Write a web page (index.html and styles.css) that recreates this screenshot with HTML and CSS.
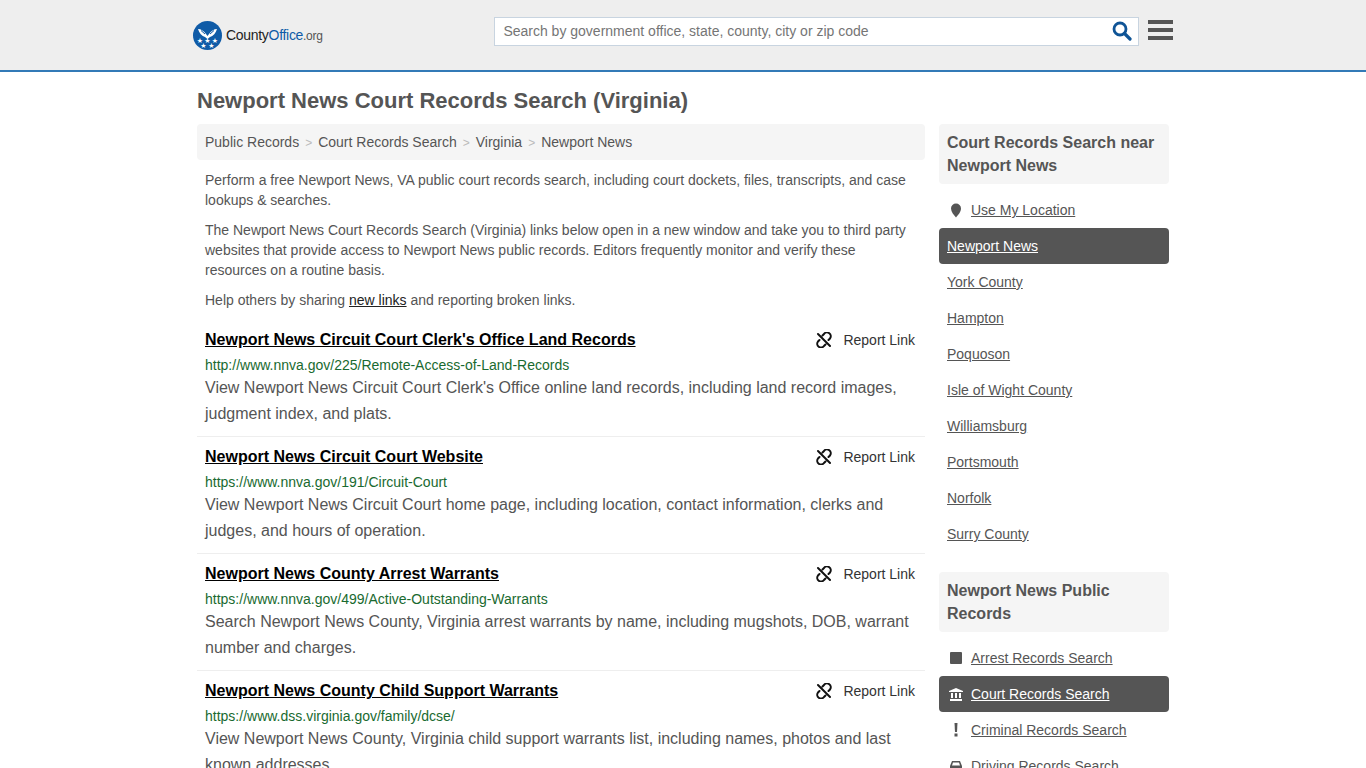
FILE: index.html
```html
<!DOCTYPE html>
<html>
<head>
<title>Newport News Court Records Search (Virginia)</title>
<link rel="stylesheet" href="styles.css">
</head>
<body>
<div class="header">
<div class="headerin">
<a class="logo" href="#">
<svg width="29" height="29" viewBox="0 0 29 29">
<circle cx="14.5" cy="14.5" r="14.5" fill="#0f5ba7"/>
<path d="M5 8 C8 8 11 10 13 13 L14.5 15 L16 13 C18 10 21 8 24 8 C23 12 20 15 17 16 L14.5 18 L12 16 C9 15 6 12 5 8 Z" fill="#fff"/>
<path d="M8 9.500 L12 13 M21 9.500 L17 13" stroke="#0f5ba7" stroke-width="1"/>
<text x="7" y="22" class="logostar">★</text>
<text x="14.500" y="22" class="logostar">★</text>
<text x="22" y="22" class="logostar">★</text>
<text x="10.500" y="27" class="logostar">★</text>
<text x="18.500" y="27" class="logostar">★</text>
</svg>
<span class="logotext">County<b>Office</b><i>.org</i></span>
</a>
<div class="search">
<span class="searchtext">Search by government office, state, county, city or zip code</span>
<svg width="20" height="20" viewBox="0 0 20 20"><circle cx="8" cy="8" r="6" fill="none" stroke="#0f5496" stroke-width="2.800"/><path d="M12.500 12.500 L18 18" stroke="#0f5496" stroke-width="3.200" stroke-linecap="round"/></svg>
</div>
<div class="burger"><span></span><span></span><span></span></div>
</div>
</div>

<div class="wrap">
<div class="main">
<h1>Newport News Court Records Search (Virginia)</h1>
<div class="crumbs">
<a href="#">Public Records</a><span class="sep">&gt;</span><a href="#">Court Records Search</a><span class="sep">&gt;</span><a href="#">Virginia</a><span class="sep">&gt;</span><a href="#">Newport News</a>
</div>
<div class="intro">
<p>Perform a free Newport News, VA public court records search, including court dockets, files, transcripts, and case lookups &amp; searches.</p>
<p>The Newport News Court Records Search (Virginia) links below open in a new window and take you to third party websites that provide access to Newport News public records. Editors frequently monitor and verify these resources on a routine basis.</p>
<p>Help others by sharing <a href="#">new links</a> and reporting broken links.</p>
</div>

<div class="item">
<div class="itemtop"><a class="itemtitle" href="#">Newport News Circuit Court Clerk's Office Land Records</a>
<span class="report"><svg class="unlink" width="16" height="16" viewBox="0 0 16 16"><path d="M6.500 3.500 L8 2 A3.200 3.200 0 0 1 14 6.500 L12.500 8 M9.500 12.500 L8 14 A3.200 3.200 0 0 1 2 9.500 L3.500 8 M2 2 L14 14" fill="none" stroke="#111" stroke-width="2" stroke-linecap="round"/></svg>Report Link</span></div>
<div class="url">http://www.nnva.gov/225/Remote-Access-of-Land-Records</div>
<div class="desc">View Newport News Circuit Court Clerk's Office online land records, including land record images, judgment index, and plats.</div>
</div>

<div class="item">
<div class="itemtop"><a class="itemtitle" href="#">Newport News Circuit Court Website</a>
<span class="report"><svg class="unlink" width="16" height="16" viewBox="0 0 16 16"><path d="M6.500 3.500 L8 2 A3.200 3.200 0 0 1 14 6.500 L12.500 8 M9.500 12.500 L8 14 A3.200 3.200 0 0 1 2 9.500 L3.500 8 M2 2 L14 14" fill="none" stroke="#111" stroke-width="2" stroke-linecap="round"/></svg>Report Link</span></div>
<div class="url">https://www.nnva.gov/191/Circuit-Court</div>
<div class="desc">View Newport News Circuit Court home page, including location, contact information, clerks and judges, and hours of operation.</div>
</div>

<div class="item">
<div class="itemtop"><a class="itemtitle" href="#">Newport News County Arrest Warrants</a>
<span class="report"><svg class="unlink" width="16" height="16" viewBox="0 0 16 16"><path d="M6.500 3.500 L8 2 A3.200 3.200 0 0 1 14 6.500 L12.500 8 M9.500 12.500 L8 14 A3.200 3.200 0 0 1 2 9.500 L3.500 8 M2 2 L14 14" fill="none" stroke="#111" stroke-width="2" stroke-linecap="round"/></svg>Report Link</span></div>
<div class="url">https://www.nnva.gov/499/Active-Outstanding-Warrants</div>
<div class="desc">Search Newport News County, Virginia arrest warrants by name, including mugshots, DOB, warrant number and charges.</div>
</div>

<div class="item">
<div class="itemtop"><a class="itemtitle" href="#">Newport News County Child Support Warrants</a>
<span class="report"><svg class="unlink" width="16" height="16" viewBox="0 0 16 16"><path d="M6.500 3.500 L8 2 A3.200 3.200 0 0 1 14 6.500 L12.500 8 M9.500 12.500 L8 14 A3.200 3.200 0 0 1 2 9.500 L3.500 8 M2 2 L14 14" fill="none" stroke="#111" stroke-width="2" stroke-linecap="round"/></svg>Report Link</span></div>
<div class="url">https://www.dss.virginia.gov/family/dcse/</div>
<div class="desc">View Newport News County, Virginia child support warrants list, including names, photos and last known addresses.</div>
</div>
</div>

<div class="side">
<div class="sidehead">Court Records Search near Newport News</div>
<ul class="sidelist first">
<li class="hasicon"><svg width="12" height="15" viewBox="0 0 12 15"><path d="M6 0.500 A5 5 0 0 1 11 5.500 C11 9 8 12 6 14.500 C4 12 1 9 1 5.500 A5 5 0 0 1 6 0.500 Z" fill="#555"/></svg><a href="#">Use My Location</a></li>
<li class="on"><a href="#">Newport News</a></li>
<li><a href="#">York County</a></li>
<li><a href="#">Hampton</a></li>
<li><a href="#">Poquoson</a></li>
<li><a href="#">Isle of Wight County</a></li>
<li><a href="#">Williamsburg</a></li>
<li><a href="#">Portsmouth</a></li>
<li><a href="#">Norfolk</a></li>
<li><a href="#">Surry County</a></li>
</ul>
<div class="sidehead">Newport News Public Records</div>
<ul class="sidelist">
<li class="hasicon"><svg width="12" height="12" viewBox="0 0 12 12"><rect width="12" height="12" rx="1" fill="#555"/></svg><a href="#">Arrest Records Search</a></li>
<li class="hasicon on"><svg width="14" height="13" viewBox="0 0 14 13"><path d="M7 0 L14 3 V4 H0 V3 Z M1 11 H13 V13 H1 Z M2 5 H4 V10 H2 Z M6 5 H8 V10 H6 Z M10 5 H12 V10 H10 Z" fill="#fff"/></svg><a href="#">Court Records Search</a></li>
<li class="hasicon"><svg width="12" height="14" viewBox="0 0 12 14"><path d="M4.500 0 H7.500 L7 9 H5 Z" fill="#555"/><rect x="4.500" y="10.500" width="3" height="3" fill="#555"/></svg><a href="#">Criminal Records Search</a></li>
<li class="hasicon"><svg width="14" height="13" viewBox="0 0 14 13"><path d="M3 1 H11 L13 6 V12 H11 V10.500 H3 V12 H1 V6 Z M4 2.500 L3 5.500 H11 L10 2.500 Z" fill="#555" fill-rule="evenodd"/></svg><a href="#">Driving Records Search</a></li>
</ul>
</div>
</div>
</body>
</html>
```

FILE: styles.css
```css
html, body{
height:768px;
overflow:hidden;
}

body{
margin:0;
font-family:"Liberation Sans", Arial, sans-serif;
font-size:14px;
color:#555555;
background-color:#ffffff;
}

a{
color:#555555;
}

.header{
height:70px;
background-color:#eeeeee;
border-bottom:2px solid #337ab7;
}

.headerin{
width:980px;
margin-left:193px;
display:flex;
align-items:center;
height:62px;
}

.logo{
display:flex;
align-items:center;
text-decoration:none;
margin-top:8px;
width:302px;
}

.logostar{
font-size:7px;
fill:#ffffff;
text-anchor:middle;
font-family:"DejaVu Sans", sans-serif;
}

.logotext{
font-size:14px;
color:#222222;
margin-left:4px;
letter-spacing:-0.3px;
}

.logotext b{
font-weight:normal;
color:#0f5ba7;
}

.logotext i{
font-style:normal;
font-size:12px;
color:#555555;
}

.search{
width:644px;
height:27px;
background-color:#ffffff;
border:1px solid #c8d4e0;
display:flex;
align-items:center;
justify-content:space-between;
padding:0 6px 0 8px;
box-sizing:content-box;
width:630px;
}

.searchtext{
color:#757575;
font-size:14px;
}

.burger{
margin-left:9px;
width:25px;
display:flex;
flex-direction:column;
gap:4px;
margin-top:-2px;
}

.burger span{
display:block;
height:4px;
background-color:#555555;
}

.wrap{
width:972px;
margin-left:197px;
display:flex;
gap:14px;
}

.main{
width:728px;
height:696px;
overflow:hidden;
}

h1{
font-size:22px;
line-height:26px;
margin:16px 0 10px;
color:#555555;
}

.crumbs{
background-color:#f5f5f5;
height:36px;
line-height:36px;
padding-left:8px;
border-radius:4px;
}

.crumbs a{
text-decoration:none;
}

.sep{
color:#bbbbbb;
margin:0 6px;
font-size:12px;
}

.intro{
padding:0 8px;
margin-top:10px;
line-height:20px;
}

.intro p{
margin:0 0 10px;
}

.intro a{
color:#222222;
}

.item{
padding:8px 8px 8px;
border-bottom:1px solid #eeeeee;
height:100px;
}

.itemtop{
display:flex;
justify-content:space-between;
align-items:center;
height:24px;
margin-top:0;
}

.itemtitle{
font-size:16px;
font-weight:bold;
color:#000000;
}

.report{
display:flex;
align-items:center;
color:#333333;
padding-right:2px;
}

.unlink{
margin-right:11px;
}

.url{
color:#196a30;
line-height:20px;
margin-top:3px;
}

.desc{
font-size:16px;
line-height:26px;
}

.side{
width:230px;
margin-top:52px;
}

.sidehead{
background-color:#f5f5f5;
border-radius:4px;
padding:7px 8px;
font-size:16px;
font-weight:bold;
line-height:23px;
}

.sidelist{
list-style-type:none;
margin:8px 0 10px;
padding:0;
}

.sidelist.first{
margin-top:8px;
margin-bottom:20px;
}

.sidelist li{
height:36px;
display:flex;
align-items:center;
padding-left:8px;
border-radius:4px;
}

.sidelist li svg{
width:18px;
flex:none;
margin-right:6px;
}

.sidelist li.on{
background-color:#555555;
}

.sidelist li.on a{
color:#ffffff;
}
```
